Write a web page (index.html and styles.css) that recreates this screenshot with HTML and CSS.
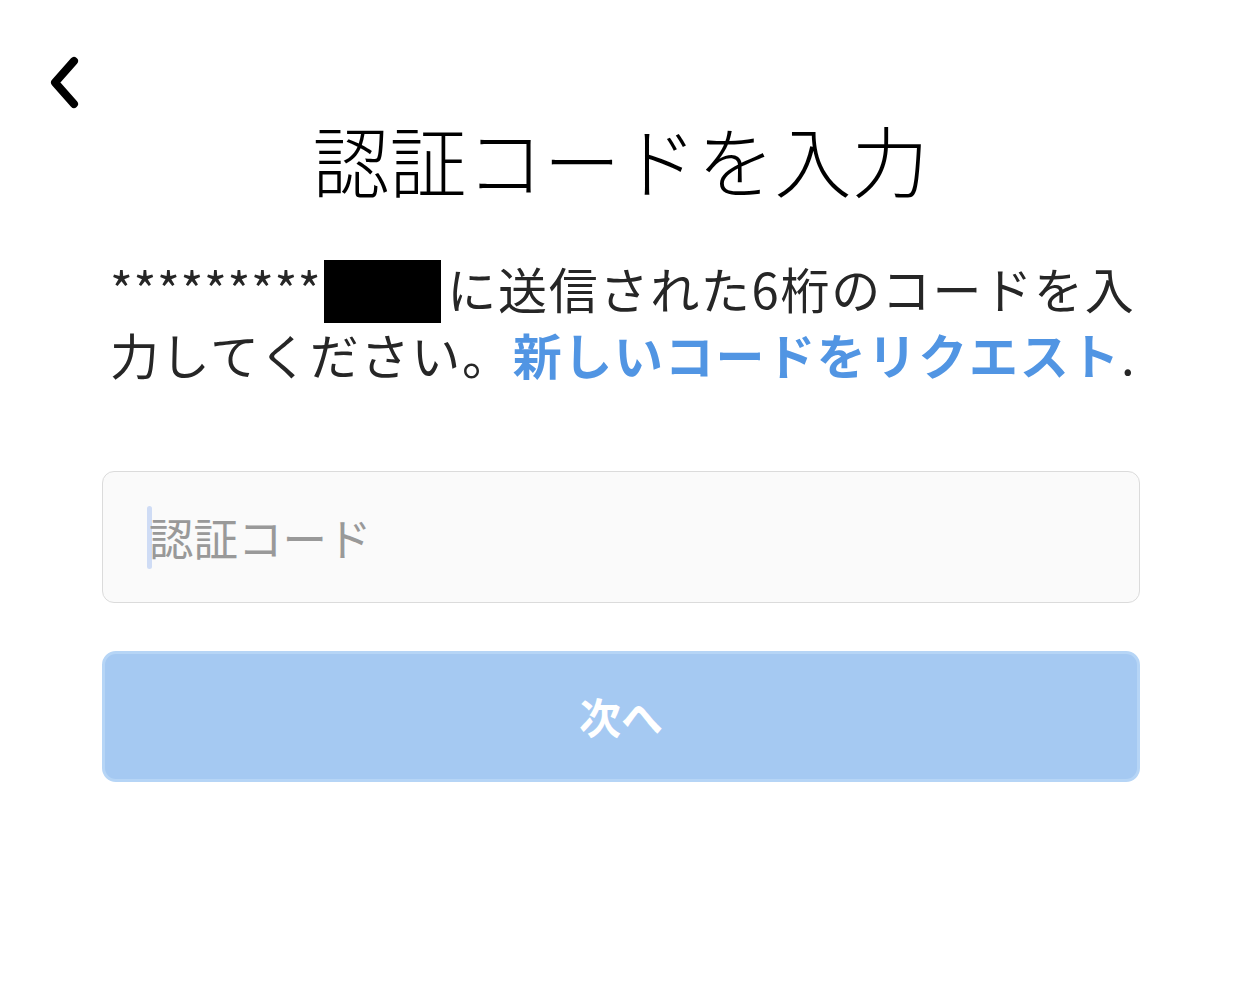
FILE: index.html
```html
<!DOCTYPE html>
<html lang="ja">
<head>
<meta charset="utf-8">
<title>認証コードを入力</title>
<link rel="stylesheet" href="styles.css">
</head>
<body>
<div class="page">
  <div class="topbar">
    <button class="back" aria-label="戻る">
      <svg width="40" height="56" viewBox="0 0 40 56"><path d="M29 6 L10 27.5 L29 49" fill="none" stroke="#000" stroke-width="8" stroke-linecap="round" stroke-linejoin="round"/></svg>
    </button>
  </div>
  <h1 class="title">認証コードを入力</h1>
  <p class="desc">
    <span class="line"><span class="stars">*********</span><span class="redact"></span>に送信された6桁のコードを入</span>
    <span class="line">力してください。<a class="link" href="#">新しいコードをリクエスト</a>.</span>
  </p>
  <div class="field">
    <span class="caret"></span><span class="placeholder">認証コード</span>
  </div>
  <button class="next">次へ</button>
</div>
</body>
</html>
```

FILE: styles.css
```css
html, body {
  margin: 0;
  padding: 0;
  background: #fff;
}
body {
  font-family: "Noto Sans CJK JP", "Noto Sans", sans-serif;
  color: #262626;
}
.page {
  width: 1241px;
  min-height: 984px;
}
.topbar {
  padding: 55px 0 0 45px;
  height: 58px;
}
.back {
  border: 0;
  background: none;
  padding: 0;
  display: block;
}
.title {
  margin: 0;
  margin-top: -4px;
  font-size: 77px;
  font-weight: 300;
  line-height: 100px;
  text-align: center;
  color: #000;
}
.desc {
  margin: 48px 0 0 0;
  padding: 0 0 0 110px;
  font-size: 49px;
  line-height: 62px;
  color: #262626;
  letter-spacing: 1.7px;
}
.line {
  display: block;
  white-space: nowrap;
}
.stars {
  letter-spacing: 0.6px;
}
.redact {
  display: inline-block;
  width: 117px;
  height: 63px;
  background: #000;
  margin-left: 3px;
  margin-right: 6px;
  vertical-align: -14px;
}
.link {
  color: #5195e3;
  font-weight: 700;
  text-decoration: none;
}
.field {
  margin: 86px 101px 0 102px;
  height: 130px;
  border: 1px solid #dbdbdb;
  border-radius: 12px;
  background: #fafafa;
  display: flex;
  align-items: center;
  padding-left: 44px;
}
.caret {
  display: inline-block;
  width: 5px;
  height: 63px;
  border-radius: 3px;
  background: #cfdcf5;
  margin-right: -3px;
}
.placeholder {
  font-size: 44.5px;
  color: #999;
  line-height: 1;
}
.next {
  display: flex;
  align-items: center;
  justify-content: center;
  margin: 48px 101px 0 102px;
  width: 1038px;
  height: 131px;
  border: 3px solid #b6d5f6;
  border-radius: 14px;
  background: #a5c9f2;
  color: #fff;
  font-family: "Noto Sans CJK JP", "Noto Sans", sans-serif;
  font-size: 42px;
  font-weight: 700;
  padding-bottom: 4px;
}
```
